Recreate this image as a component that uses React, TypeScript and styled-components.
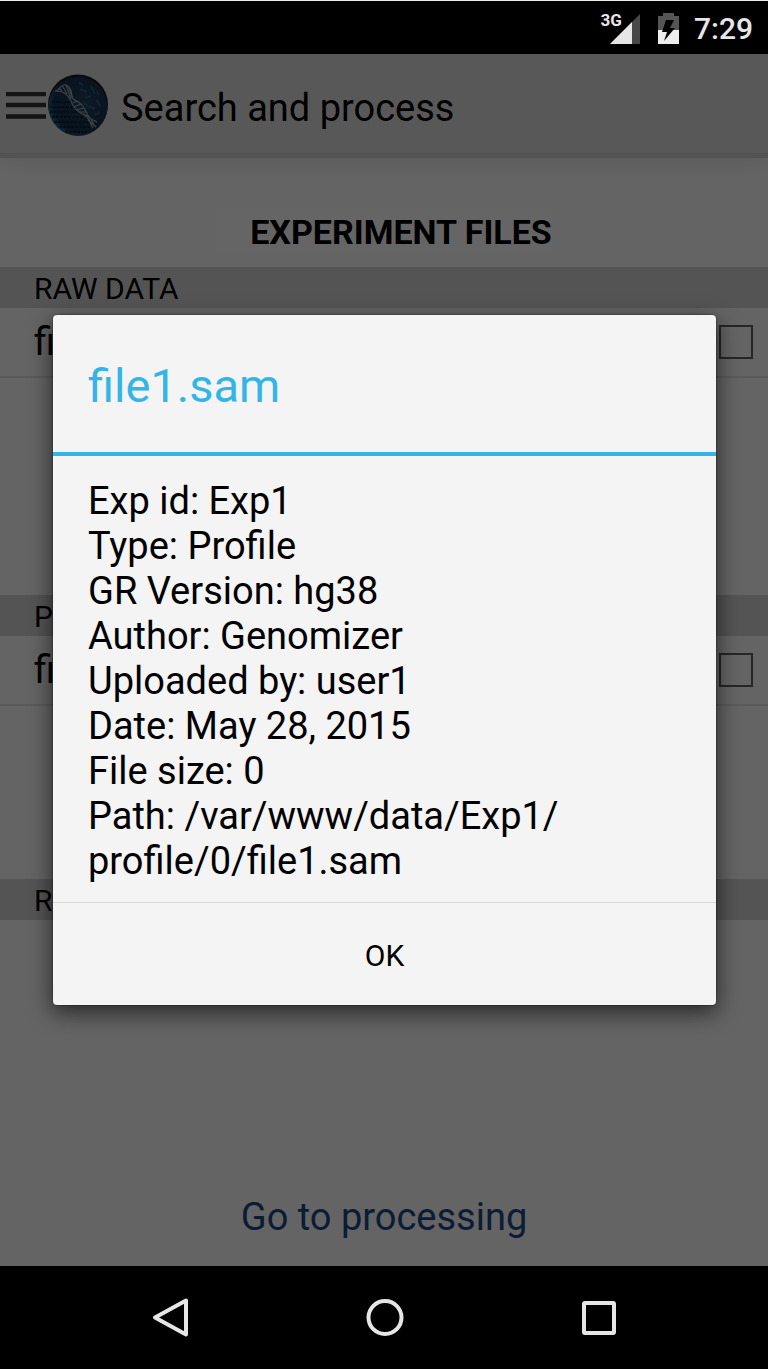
import React, { Fragment } from "react";
import styled, { createGlobalStyle } from "styled-components";

const GlobalStyle = createGlobalStyle`
  *, *::before, *::after { box-sizing: border-box; }
  body {
    margin: 0;
    background: #000;
    color: #000;
    font-family: Roboto, "Liberation Sans", sans-serif;
  }
  h1, h2, h3, p { margin: 0; padding: 0; font-weight: 400; }
  button { border: 0; padding: 0; background: none; color: inherit; font: inherit; }
  svg { display: block; flex: none; }
`;

const Screen = styled.div`
  display: flex;
  flex-direction: column;
  min-height: 100vh;
`;

const StatusBar = styled.header`
  display: flex;
  align-items: center;
  justify-content: flex-end;
  height: 54px;
  padding: 2px 15px 0 0;
  border-top: 1px solid #e8eeee;
  background: #000;
  color: #e6e6e6;
`;

const NetworkType = styled.span`
  align-self: flex-start;
  padding-top: 7px;
  margin-right: -12px;
  font-size: 17px;
  line-height: 20px;
  font-weight: 700;
`;

const Clock = styled.time`
  margin-left: 15px;
  font-size: 30px;
  line-height: 36px;
  font-weight: 500;
`;

const BatteryIcon = styled.svg`
  margin-left: 18px;
`;

const Activity = styled.div`
  position: relative;
  flex: 1;
  display: flex;
  flex-direction: column;
  background: #fafafa;
`;

const AppBar = styled.div`
  display: flex;
  align-items: center;
  height: 104px;
  padding: 4px 0 0 5px;
  border-bottom: 5px solid #d0d0d0;
  background: #dcdcdc;
  box-shadow: 0 4px 20px rgba(0, 0, 0, 0.1);
`;

const AppTitle = styled.h1`
  margin-left: 12px;
  padding-top: 6px;
  font-size: 38px;
  line-height: 45px;
`;

const IconButton = styled.button`
  display: flex;
`;

const Heading = styled.h2`
  align-self: center;
  margin: 50px 0 13px;
  padding: 2px 0 0 34px;
  background: #fdfdfd;
  font-size: 34px;
  line-height: 44px;
  font-weight: 700;
`;

const Section = styled.section<{ $weight: number }>`
  display: flex;
  flex-direction: column;
  flex: ${(p) => p.$weight} 0 auto;
  height: 41px;
`;

const SectionTitle = styled.h3`
  padding: 4px 34px 1px;
  background: #d2d2d2;
  font-size: 30px;
  line-height: 36px;
`;

const FileRow = styled.label`
  display: flex;
  align-items: center;
  justify-content: space-between;
  height: 70px;
  padding: 0 15px 0 34px;
  border-bottom: 2px solid #e2e2e2;
  font-size: 38px;
  line-height: 45px;
`;

const Tick = styled.input`
  appearance: none;
  width: 34px;
  height: 34px;
  margin: 0;
  border: 2px solid #606060;
`;

const ProcessButton = styled.button`
  height: 103px;
  padding-top: 6px;
  color: #1c4684;
  font-size: 38px;
  line-height: 45px;
`;

const Scrim = styled.div`
  position: absolute;
  inset: 0;
  display: flex;
  align-items: center;
  padding: 0 52px 0 53px;
  background: rgba(0, 0, 0, 0.6);
`;

const Dialog = styled.div`
  flex: 1;
  overflow: hidden;
  border-radius: 4px;
  background: #f4f4f4;
  box-shadow: 0 0 1px 1px rgba(0, 0, 0, 0.2), 0 7px 22px 1px rgba(0, 0, 0, 0.6);
`;

const DialogTitle = styled.h2`
  padding: 42px 35px 38px;
  border-bottom: 4px solid #33b5e5;
  color: #33b5e5;
  font-size: 47px;
  line-height: 57px;
`;

const Details = styled.div`
  padding: 23px 35px 18px;
  font-size: 38px;
  line-height: 45px;
`;

const DialogButton = styled.button`
  width: 100%;
  height: 103px;
  padding-top: 3px;
  border-top: 1px solid #d8d8d8;
  font-size: 30px;
  line-height: 36px;
`;

const NavBar = styled.nav`
  display: flex;
  align-items: center;
  justify-content: center;
  gap: 174px;
  height: 103px;
  background: #000;
`;

const details = [
  "Exp id: Exp1",
  "Type: Profile",
  "GR Version: hg38",
  "Author: Genomizer",
  "Uploaded by: user1",
  "Date: May 28, 2015",
  "File size: 0",
];

const directories = ["/var/www/data/Exp1/", "profile/0/file1.sam"];

const sections = [
  { title: "RAW DATA", files: ["file1.fastq"], weight: 287 },
  { title: "PROFILE DATA", files: ["file1.sam"], weight: 243 },
  { title: "REGION DATA", files: [], weight: 243 },
];

const SignalIcon = () => (
  <svg width="30" height="30" viewBox="0 0 30 30" aria-hidden="true">
    <path d="M0 30L30 0V30Z" fill="#484848" />
    <path d="M0 30L22 8V30Z" fill="#e6e6e6" />
  </svg>
);

const Battery = () => (
  <BatteryIcon width="21" height="31" viewBox="0 0 21 31" aria-hidden="true">
    <path d="M0 3H5V0H16V3H21V17H0Z" fill="#555" />
    <path d="M0 17H21V31H0Z" fill="#eee" />
    <path d="M8 7H16L12 15H17L6 28L9 19H4Z" fill="#000" />
  </BatteryIcon>
);

const MenuIcon = () => (
  <svg width="42" height="28" viewBox="0 0 42 28" aria-hidden="true">
    <path d="M1 2H41M1 13H41M1 24.500H41" stroke="#323232" strokeWidth="4.400" />
  </svg>
);

const Logo = () => (
  <svg width="62" height="66" viewBox="0 0 62 66" aria-hidden="true">
    <defs>
      <radialGradient id="globe" cx="60%" cy="45%" r="58%">
        <stop offset="0" stopColor="#23425e" />
        <stop offset="0.6" stopColor="#17344f" />
        <stop offset="0.88" stopColor="#143350" />
        <stop offset="1" stopColor="#285878" />
      </radialGradient>
    </defs>
    <circle cx="31" cy="31.500" r="30" fill="#1c1c1c" />
    <circle cx="31" cy="33.500" r="29.500" fill="url(#globe)" />
    <path
      d="M5 29H24M3 34H26M3 39H30M5 44H36M7 49H42M12 54H44M18 59H40"
      stroke="#06182a"
      strokeWidth="1.500"
      strokeDasharray="3 1"
    />
    <path
      d="M33 16L40 19M44 13L48 21M37 29L42 35M49 27L54 34M47 42L52 40M38 25L44 23M50 18L52 22M32 10L36 12M42 33L48 36"
      stroke="#3e7094"
      strokeWidth="1.500"
      opacity="0.700"
    />
    <path
      d="M8 18C12 18 14 12 17 12C21 11 25 17 25 23C25 28 31 27 35 32C40 38 39 42 44 46L50 49M8 18C14 18 17 19 20 22C24 25 24 30 27 34C31 40 36 40 40 44C44 48 43 51 46 55M41 47L49 54M44 46L47 52"
      fill="none"
      stroke="#9aa9b2"
      strokeWidth="1.200"
    />
    <path
      d="M12 15L15 18M15 12L20 21M19 12L24 26M22 15L25 24M26 30L30 28M27 34L34 31M29 37L37 35M32 39L39 39M36 41L41 43"
      stroke="#9aa9b2"
      strokeWidth="1.100"
    />
  </svg>
);

const NavIcon = ({ children }: { children: React.ReactNode }) => (
  <svg
    width="40"
    height="42"
    viewBox="0 0 40 42"
    fill="none"
    stroke="#e6e6e6"
    strokeWidth="4"
    strokeLinejoin="round"
    aria-hidden="true"
  >
    {children}
  </svg>
);

export default function App() {
  return (
    <Screen>
      <GlobalStyle />
      <StatusBar>
        <NetworkType>3G</NetworkType>
        <SignalIcon />
        <Battery />
        <Clock>7:29</Clock>
      </StatusBar>

      <Activity>
        <AppBar>
          <IconButton aria-label="Open menu">
            <MenuIcon />
          </IconButton>
          <Logo />
          <AppTitle>Search and process</AppTitle>
        </AppBar>
        <Heading>EXPERIMENT FILES</Heading>
        {sections.map((s) => (
          <Section key={s.title} $weight={s.weight}>
            <SectionTitle>{s.title}</SectionTitle>
            {s.files.map((f) => (
              <FileRow key={f}>
                {f}
                <Tick type="checkbox" />
              </FileRow>
            ))}
          </Section>
        ))}
        <ProcessButton>Go to processing</ProcessButton>

        <Scrim>
          <Dialog role="dialog" aria-modal="true" aria-labelledby="file-title">
            <DialogTitle id="file-title">file1.sam</DialogTitle>
            <Details>
              {details.map((line) => (
                <p key={line}>{line}</p>
              ))}
              <p>
                Path:{" "}
                {directories.map((part) => (
                  <Fragment key={part}>
                    {part}
                    <wbr />
                  </Fragment>
                ))}
              </p>
            </Details>
            <DialogButton>OK</DialogButton>
          </Dialog>
        </Scrim>
      </Activity>

      <NavBar>
        <IconButton aria-label="Back">
          <NavIcon>
            <path d="M36 3.500V37.500L5 20.500Z" />
          </NavIcon>
        </IconButton>
        <IconButton aria-label="Home">
          <NavIcon>
            <circle cx="21" cy="20.500" r="16.500" />
          </NavIcon>
        </IconButton>
        <IconButton aria-label="Recent apps">
          <NavIcon>
            <rect x="6" y="6" width="30" height="30" rx="1" />
          </NavIcon>
        </IconButton>
      </NavBar>
    </Screen>
  );
}
